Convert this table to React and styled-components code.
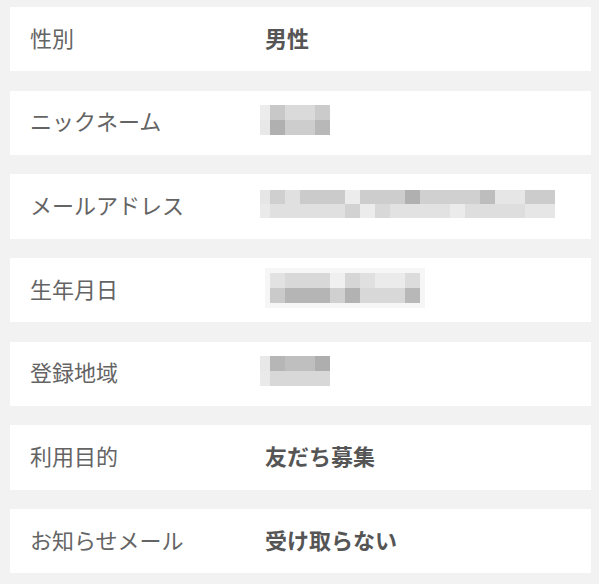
import React from "react";
import styled, { createGlobalStyle } from "styled-components";

const Global = createGlobalStyle`
  html, body { margin: 0; padding: 0; background: #f2f2f2; }
  body { font-family: "Noto Sans CJK JP", "Noto Sans", sans-serif; }
`;

const Page = styled.div`
  width: 599px;
  height: 584px;
  box-sizing: border-box;
  padding: 7px 8px 0 10px;
  background: #f2f2f2;
  display: flex;
  flex-direction: column;
  gap: 19.5px;
`;

const Row = styled.div`
  height: 64.2px;
  box-sizing: border-box;
  padding: 0 0 5px 20px;
  background: #ffffff;
  display: grid;
  grid-template-columns: 235px 1fr;
  align-items: center;
`;

const Label = styled.span`
  font-size: 22px;
  line-height: 1;
  color: #646464;
  font-weight: 400;
`;

const Value = styled.span`
  font-size: 22px;
  line-height: 1;
  color: #555555;
  font-weight: 700;
`;

const Mosaic = styled.div`
  display: flex;
  flex-direction: column;
  margin-left: ${(p) => p.$offset || 0}px;
  width: max-content;
  box-shadow: ${(p) => (p.$rim ? "0 0 0 5px rgba(235,235,235,0.45)" : "none")};
`;

const MosaicRow = styled.div`
  display: flex;
  height: ${(p) => p.$h}px;
`;

const Cell = styled.div`
  height: 100%;
`;

function Pixelated({ rows, offset, rim }) {
  return (
    <Mosaic $offset={offset} $rim={rim}>
      {rows.map((r, i) => (
        <MosaicRow key={i} $h={r.h}>
          {r.cells.map(([w, c], j) => (
            <Cell key={j} style={{ width: w, background: c }} />
          ))}
        </MosaicRow>
      ))}
    </Mosaic>
  );
}

const nick = [
  { h: 15, cells: [[10, "#ececec"], [15, "#c8c8c8"], [30, "#dadada"], [15, "#cbcbcb"]] },
  { h: 15, cells: [[10, "#e8e8e8"], [15, "#b0b0b0"], [30, "#cdcdcd"], [15, "#b8b8b8"]] },
];

const mail = [
  {
    h: 14,
    cells: [
      [10, "#e6e6e6"], [15, "#cfcfcf"], [15, "#e0e0e0"], [45, "#cbcbcb"], [15, "#ececec"],
      [45, "#cdcdcd"], [15, "#b0b0b0"], [60, "#d0d0d0"], [15, "#bdbdbd"], [30, "#e6e6e6"], [30, "#cccccc"],
    ],
  },
  {
    h: 14,
    cells: [
      [10, "#eaeaea"], [75, "#e0e0e0"], [15, "#d2d2d2"], [15, "#ececec"], [15, "#d8d8d8"],
      [60, "#e2e2e2"], [15, "#ebebeb"], [60, "#dedede"], [30, "#e6e6e6"],
    ],
  },
];

const birth = [
  {
    h: 15,
    cells: [
      [15, "#e2e2e2"], [45, "#d8d8d8"], [15, "#f0f0f0"], [15, "#d6d6d6"], [15, "#e0e0e0"], [30, "#ebebeb"], [15, "#dcdcdc"],
    ],
  },
  {
    h: 15,
    cells: [
      [15, "#cacaca"], [45, "#b5b5b5"], [15, "#d0d0d0"], [15, "#b2b2b2"], [45, "#d8d8d8"], [15, "#b8b8b8"],
    ],
  },
];

const region = [
  { h: 15, cells: [[10, "#e8e8e8"], [15, "#b6b6b6"], [30, "#bfbfbf"], [15, "#aeaeae"]] },
  { h: 15, cells: [[10, "#eaeaea"], [60, "#d8d8d8"]] },
];

const items = [
  { label: "性別", value: "男性" },
  { label: "ニックネーム", mosaic: nick, offset: -5 },
  { label: "メールアドレス", mosaic: mail, offset: -5 },
  { label: "生年月日", mosaic: birth, offset: 5, rim: true },
  { label: "登録地域", mosaic: region, offset: -5 },
  { label: "利用目的", value: "友だち募集" },
  { label: "お知らせメール", value: "受け取らない" },
];

export default function App() {
  return (
    <>
      <Global />
      <Page>
        {items.map((it) => (
          <Row key={it.label}>
            <Label>{it.label}</Label>
            {it.value ? (
              <Value>{it.value}</Value>
            ) : (
              <Pixelated rows={it.mosaic} offset={it.offset} rim={it.rim} />
            )}
          </Row>
        ))}
      </Page>
    </>
  );
}
